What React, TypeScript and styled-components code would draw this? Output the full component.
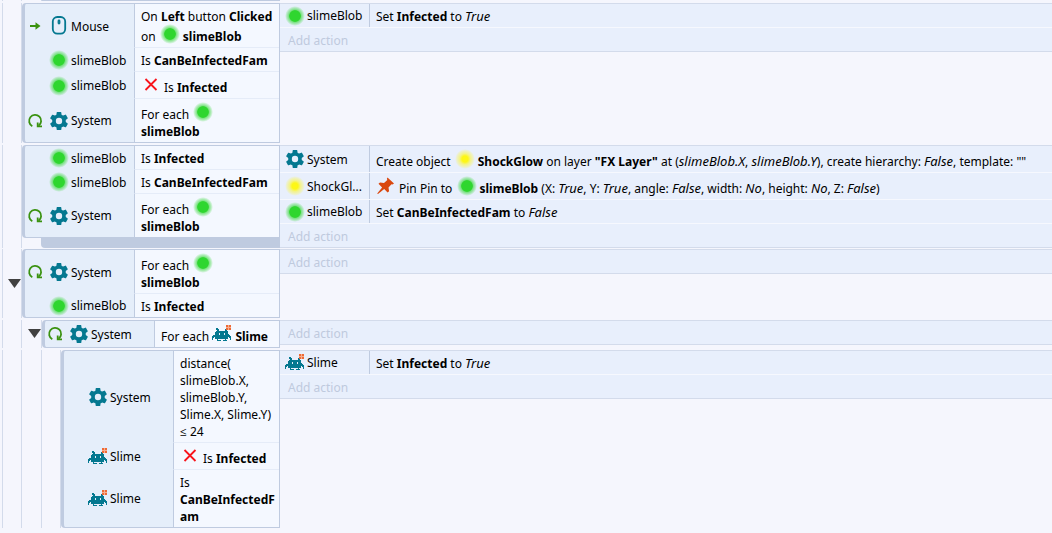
import React from 'react';
import styled, { createGlobalStyle, css } from 'styled-components';

const c = {
  page: '#f5f6fd',
  object: '#e5eefa',
  condition: '#f4f8ff',
  action: '#e8effc',
  border: '#bfcbe0',
  line: '#d3dbeb',
  soft: '#e5ecf8',
  rule: '#f6f8fe',
  teal: '#047890',
  leaf: '#3a9210',
  muted: '#bfcade',
};

const GlobalStyle = createGlobalStyle`
  * { box-sizing: border-box; }
  body {
    margin: 0;
    background: ${c.page};
    color: #000;
    font-family: "Noto Sans", "Open Sans", sans-serif;
    font-size: 12px;
    line-height: 17px;
  }
  button { font: inherit; border: 0; padding: 0; background: none; cursor: pointer; }
  i { font-size: 13px; line-height: 1; }
`;

const Sheet = styled.main`
  display: flex;
  flex-direction: column;
  padding-left: 2px;
  overflow: hidden;
`;

const EventRow = styled.section<{ $tight?: boolean }>`
  display: flex;
  margin-bottom: ${p => (p.$tight ? 1 : 2)}px;
`;

const Left = styled.div`
  display: flex;
  flex: none;
  width: 278px;
`;

const Guide = styled.div<{ $wide?: boolean }>`
  display: flex;
  align-items: center;
  justify-content: flex-end;
  flex: none;
  width: ${p => (p.$wide ? 20 : 19)}px;
  border-left: 1px solid ${c.line};
`;

const Toggle = styled.button`
  display: flex;
  flex: none;
  width: 13px;
  height: 10px;
`;

const Stack = styled.div`
  flex: 1;
  min-width: 0;
  border-left: 1px solid ${c.line};
`;

const Conditions = styled.div`
  border: 1px solid ${c.border};
  border-left-width: 3px;
  border-radius: 4px 0 0 4px;
  background: ${c.object};
`;

const Condition = styled.div`
  display: grid;
  grid-template-columns: 109px minmax(0, 1fr);
`;

const ObjectCell = styled.div`
  display: grid;
  grid-template-columns: 20px 20px 1fr;
  align-items: center;
  column-gap: 2px;
  padding-left: 2px;
`;

const ConditionText = styled.div<{ $last: boolean }>`
  padding: 4px 3px 2px 6px;
  border-left: 1px solid ${c.border};
  background: ${c.condition};
  overflow-wrap: anywhere;
  ${p => !p.$last && css`border-bottom: 1px solid ${c.soft};`}
`;

const SubBar = styled.div<{ $thin?: boolean }>`
  height: ${p => (p.$thin ? 1 : 10)}px;
  margin-left: 19px;
  background: ${c.border};
  border-bottom-left-radius: 4px;
`;

const Actions = styled.div`
  flex: 1;
  min-width: 0;
  align-self: flex-start;
  border-top: 1px solid ${c.line};
  border-bottom: 1px solid ${c.line};
  background: ${c.action};
`;

const Action = styled.div`
  display: grid;
  grid-template-columns: 90px minmax(0, 1fr);
  border-bottom: 1px solid ${c.rule};
`;

const ActionObject = styled.div`
  display: flex;
  align-items: center;
  gap: 2px;
  padding: 0 5px;
  border-right: 1px solid ${c.border};
`;

const Name = styled.span`
  white-space: nowrap;
`;

const ActionText = styled.div`
  padding: 4px 6px 2px;
`;

const AddAction = styled.button`
  display: block;
  height: 23px;
  padding: 2px 0 0 8px;
  color: ${c.muted};
`;

const Svg = styled.svg`
  display: block;
  flex: none;
`;

const Inline = styled.span<{ $glow: boolean }>`
  display: inline-block;
  height: 20px;
  margin: -1px 3px 1px ${p => (p.$glow ? 1 : 0)}px;
  vertical-align: -4px;
`;

const Glow = styled.span<{ $color: 'green' | 'yellow' }>`
  display: block;
  flex: none;
  width: 20px;
  height: 20px;
  border-radius: 50%;
  background: ${p => p.$color === 'green'
    ? 'radial-gradient(circle closest-side, #2fd62f 54%, rgba(47,214,47,.6) 62%, rgba(47,214,47,.3) 82%, rgba(47,214,47,0) 100%)'
    : 'radial-gradient(circle closest-side, #fdf716 30%, rgba(251,245,60,.6) 55%, rgba(251,245,60,.3) 80%, rgba(251,245,60,0) 100%)'};
`;

const Gear = () => (
  <Svg width="20" height="20" viewBox="1 1 22 22" fill={c.teal}>
    <path d="M19.4 13a7.500 7.500 0 0 0 0-2l2.100-1.650a.5.5 0 0 0 .12-.64l-2-3.460a.5.5 0 0 0-.61-.22l-2.490 1a7.300 7.300 0 0 0-1.690-.98l-.38-2.650A.5.5 0 0 0 14 2h-4a.5.5 0 0 0-.49.42l-.38 2.650c-.61.25-1.170.59-1.690.98l-2.490-1a.5.5 0 0 0-.61.22l-2 3.460a.5.5 0 0 0 .12.64L4.570 11a7.900 7.900 0 0 0 0 2l-2.110 1.650a.5.5 0 0 0-.12.64l2 3.460c.12.22.39.3.61.22l2.490-1c.52.4 1.080.73 1.690.98l.38 2.650c.03.24.24.42.49.42h4c.25 0 .46-.18.49-.42l.38-2.650c.61-.25 1.170-.58 1.690-.98l2.490 1c.23.09.49 0 .61-.22l2-3.460a.5.5 0 0 0-.12-.64zM12 15.500a3.500 3.500 0 1 1 0-7 3.500 3.500 0 0 1 0 7z" />
  </Svg>
);

const MouseIcon = () => (
  <Svg width="20" height="20" viewBox="0 0 20 20" fill="none" stroke={c.teal}>
    <rect x="3.800" y="1" width="12.400" height="16.600" rx="4.500" strokeWidth="1.800" />
    <rect x="9.200" y="4.200" width="1.600" height="3.600" rx=".8" fill={c.teal} strokeWidth="1.200" />
  </Svg>
);

const Slime = () => (
  <Svg width="20" height="20" viewBox="0 0 20 20" shapeRendering="crispEdges">
    <path fill={c.teal} d="M4 4h2v1h1v2h6V5h1v1h1v1h1v3h1v1h1v1h1v4h-1v-2h-1v-1h-1v2h-2v1h-1v-1H6v1H5v-1H3v-2H2v1H1v2H0v-4h1v-1h2V8h1V7h1V6H4z" />
    <path fill={c.teal} d="M5 16h4v1H5zM11 16h4v1h-4z" />
    <path fill={c.object} d="M7 9h1v2H7zM12 9h1v2h-1z" />
    <path fill="#ee6a35" d="M14 1h2v2h-2zM17 1h2v2h-2zM14 4h2v2h-2zM17 4h2v2h-2z" />
    <path fill="#f6ad90" d="M16 1h1v5h-1zM14 3h5v1h-5z" />
  </Svg>
);

const Loop = () => (
  <Svg width="20" height="20" viewBox="0 0 20 20" fill="none" stroke={c.leaf} strokeWidth="1.800">
    <path d="M5.300 15.200A6 6 0 1 1 11.600 14.800" />
    <path d="M10.700 11.500v3.900h4.300" />
  </Svg>
);

const Arrow = () => (
  <Svg width="20" height="20" viewBox="0 0 20 20" stroke={c.leaf} strokeWidth="2" fill="none">
    <path d="M3 10h7" />
    <path d="M8.500 6.300l5 3.700-5 3.700z" fill={c.leaf} stroke="none" />
  </Svg>
);

const Cross = () => (
  <Svg width="20" height="20" viewBox="0 0 20 20" stroke="#f8141c" strokeWidth="1.800">
    <path d="M4.500 4l11 11M15.500 4l-11 11" />
  </Svg>
);

const Pin = () => (
  <Svg width="20" height="20" viewBox="0 0 20 20" fill="#d9480f">
    <path d="M11.500 1.500l6.500 6-1.500 1-1-.2-3 3.200.6 3.800-1.500 1.300-3.400-3.600L2 18l-.8-.6 4.900-6L2.500 7.800 4 6.400l4 .5 3.300-3-.4-1.200z" />
  </Svg>
);

type IconName = 'green' | 'yellow' | 'gear' | 'mouse' | 'slime' | 'cross' | 'pin';

const Icon = ({ name }: { name: IconName }) => {
  switch (name) {
    case 'green':
    case 'yellow': return <Glow $color={name} />;
    case 'gear': return <Gear />;
    case 'mouse': return <MouseIcon />;
    case 'slime': return <Slime />;
    case 'cross': return <Cross />;
    default: return <Pin />;
  }
};

const In = ({ name }: { name: IconName }) => (
  <Inline $glow={name === 'green' || name === 'yellow'}><Icon name={name} /></Inline>
);

interface Cond { lead?: 'loop' | 'arrow'; icon: IconName; object: string; text: React.ReactNode }
interface Act { icon: IconName; object: string; text: React.ReactNode }
interface Ev { depth: number; toggle?: boolean; bar?: boolean; conditions: Cond[]; actions: Act[] }

const forEachBlob = <>For each <In name="green" /> <b>slimeBlob</b></>;
const isInfected = <>Is <b>Infected</b></>;
const isFamily = <>Is <b>CanBeInfectedFam</b></>;
const notInfected = <><In name="cross" />Is <b>Infected</b></>;
const setInfected = <>Set <b>Infected</b> to <i>True</i></>;

const events: Ev[] = [
  {
    depth: 1,
    conditions: [
      { lead: 'arrow', icon: 'mouse', object: 'Mouse', text: <>On <b>Left</b> button <b>Clicked</b> on <In name="green" /><b>slimeBlob</b></> },
      { icon: 'green', object: 'slimeBlob', text: isFamily },
      { icon: 'green', object: 'slimeBlob', text: notInfected },
      { lead: 'loop', icon: 'gear', object: 'System', text: forEachBlob },
    ],
    actions: [{ icon: 'green', object: 'slimeBlob', text: setInfected }],
  },
  {
    depth: 1,
    bar: true,
    conditions: [
      { icon: 'green', object: 'slimeBlob', text: isInfected },
      { icon: 'green', object: 'slimeBlob', text: isFamily },
      { lead: 'loop', icon: 'gear', object: 'System', text: forEachBlob },
    ],
    actions: [
      { icon: 'gear', object: 'System', text: <>Create object <In name="yellow" /><b>ShockGlow</b> on layer <b>"FX Layer"</b> at (<i>slimeBlob.X</i>, <i>slimeBlob.Y</i>), create hierarchy: <i>False</i>, template: ""</> },
      { icon: 'yellow', object: 'ShockGl...', text: <><In name="pin" />Pin Pin to <In name="green" /><b>slimeBlob</b> (X: <i>True</i>, Y: <i>True</i>, angle: <i>False</i>, width: <i>No</i>, height: <i>No</i>, Z: <i>False</i>)</> },
      { icon: 'green', object: 'slimeBlob', text: <>Set <b>CanBeInfectedFam</b> to <i>False</i></> },
    ],
  },
  {
    depth: 1,
    toggle: true,
    conditions: [
      { lead: 'loop', icon: 'gear', object: 'System', text: forEachBlob },
      { icon: 'green', object: 'slimeBlob', text: isInfected },
    ],
    actions: [],
  },
  {
    depth: 2,
    toggle: true,
    conditions: [{ lead: 'loop', icon: 'gear', object: 'System', text: <>For each <In name="slime" /><b>Slime</b></> }],
    actions: [],
  },
  {
    depth: 3,
    conditions: [
      { icon: 'gear', object: 'System', text: <>distance( slimeBlob.X, slimeBlob.Y, Slime.X, Slime.Y) ≤ 24</> },
      { icon: 'slime', object: 'Slime', text: notInfected },
      { icon: 'slime', object: 'Slime', text: isFamily },
    ],
    actions: [{ icon: 'slime', object: 'Slime', text: setInfected }],
  },
];

const Guides = ({ depth, toggle }: { depth: number; toggle?: boolean }) => (
  <>
    {Array.from({ length: depth }, (_, i) => (
      <Guide key={i} $wide={i === 1}>
        {toggle && i === depth - 1 && (
          <Toggle aria-label="Collapse event">
            <Svg width="13" height="10" viewBox="0 0 13 10"><path d="M0 0h13L6.500 9z" fill="#404040" /></Svg>
          </Toggle>
        )}
      </Guide>
    ))}
  </>
);

export default function App() {
  return (
    <>
      <GlobalStyle />
      <Sheet>
        <EventRow>
          <Left>
            <Guides depth={1} />
            <Stack><SubBar $thin /></Stack>
          </Left>
        </EventRow>
        {events.map((e, n) => (
          <EventRow key={n} $tight={e.bar}>
            <Left>
              <Guides depth={e.depth} toggle={e.toggle} />
              <Stack>
                <Conditions>
                  {e.conditions.map((k, i) => (
                    <Condition key={i}>
                      <ObjectCell>
                        <span>{k.lead === 'loop' && <Loop />}{k.lead === 'arrow' && <Arrow />}</span>
                        <Icon name={k.icon} />
                        <Name>{k.object}</Name>
                      </ObjectCell>
                      <ConditionText $last={i === e.conditions.length - 1}>{k.text}</ConditionText>
                    </Condition>
                  ))}
                </Conditions>
                {e.bar && <SubBar />}
              </Stack>
            </Left>
            <Actions>
              {e.actions.map((a, i) => (
                <Action key={i}>
                  <ActionObject><Icon name={a.icon} /><Name>{a.object}</Name></ActionObject>
                  <ActionText>{a.text}</ActionText>
                </Action>
              ))}
              <AddAction>Add action</AddAction>
            </Actions>
          </EventRow>
        ))}
      </Sheet>
    </>
  );
}
